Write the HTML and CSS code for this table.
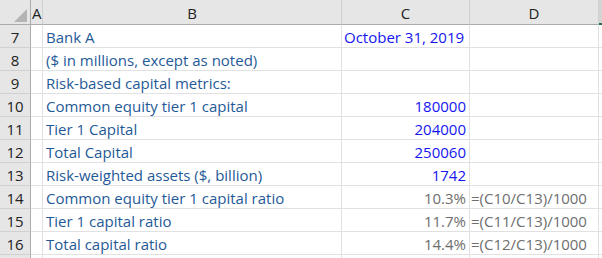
FILE: index.html
```html
<!DOCTYPE html>
<html>
<head>
<meta charset="utf-8">
<link rel="stylesheet" href="styles.css">
</head>
<body>
<div class="sheet">
  <div class="corner"><svg width="31" height="25" viewBox="0 0 31 25"><polygon points="27,9 27,22 14,22" fill="#b4b4b4"/></svg></div>
  <div class="colhead colA">A</div>
  <div class="colhead">B</div>
  <div class="colhead">C</div>
  <div class="colhead">D</div>
  <div class="colhead colE"></div>

  <div class="rowhead">7</div><div class="cell"></div><div class="cell label">Bank A</div><div class="cell date">October 31, 2019</div><div class="cell"></div><div class="cell edge"></div>
  <div class="rowhead">8</div><div class="cell"></div><div class="cell label">($ in millions, except as noted)</div><div class="cell"></div><div class="cell"></div><div class="cell edge"></div>
  <div class="rowhead">9</div><div class="cell"></div><div class="cell label">Risk-based capital metrics:</div><div class="cell"></div><div class="cell"></div><div class="cell edge"></div>
  <div class="rowhead">10</div><div class="cell"></div><div class="cell label">Common equity tier 1 capital</div><div class="cell num">180000</div><div class="cell"></div><div class="cell edge"></div>
  <div class="rowhead">11</div><div class="cell"></div><div class="cell label">Tier 1 Capital</div><div class="cell num">204000</div><div class="cell"></div><div class="cell edge"></div>
  <div class="rowhead">12</div><div class="cell"></div><div class="cell label">Total Capital</div><div class="cell num">250060</div><div class="cell"></div><div class="cell edge"></div>
  <div class="rowhead">13</div><div class="cell"></div><div class="cell label">Risk-weighted assets ($, billion)</div><div class="cell num">1742</div><div class="cell"></div><div class="cell edge"></div>
  <div class="rowhead">14</div><div class="cell"></div><div class="cell label">Common equity tier 1 capital ratio</div><div class="cell pct">10.3%</div><div class="cell formula">=(C10/C13)/1000</div><div class="cell edge"></div>
  <div class="rowhead">15</div><div class="cell"></div><div class="cell label">Tier 1 capital ratio</div><div class="cell pct">11.7%</div><div class="cell formula">=(C11/C13)/1000</div><div class="cell edge"></div>
  <div class="rowhead">16</div><div class="cell"></div><div class="cell label">Total capital ratio</div><div class="cell pct">14.4%</div><div class="cell formula">=(C12/C13)/1000</div><div class="cell edge"></div>
  <div class="rowhead last"></div><div class="cell last"></div><div class="cell last"></div><div class="cell last"></div><div class="cell last"></div><div class="cell edge last"></div>
</div>
</body>
</html>
```

FILE: styles.css
```css
* { box-sizing: border-box; }
html, body { margin: 0; padding: 0; background: #fff; }
body { width: 602px; height: 258px; overflow: hidden; }

.sheet {
  display: grid;
  grid-template-columns: 31px 12px 299px 128px 129px 3px;
  grid-template-rows: 25px repeat(10, 23px) 3px;
  font-family: "Open Sans", "Liberation Sans", sans-serif;
  font-size: 15px;
}

.corner {
  background: #e6e6e6;
  border-right: 1px solid #ababab;
  border-bottom: 1px solid #ababab;
  overflow: hidden;
}
.corner svg { display: block; }

.colhead {
  background: #e6e6e6;
  border-right: 1px solid #d0d0d0;
  border-bottom: 1px solid #ababab;
  color: #222;
  display: flex;
  align-items: center;
  justify-content: center;
  padding-top: 1px;
  overflow: visible;
  white-space: nowrap;
}
.colA { justify-content: flex-start; padding-left: 1px; }
.colE { background: #d4d4d4; border-right: none; border-bottom: 2px solid #217346; }

.rowhead {
  background: #e6e6e6;
  border-right: 1px solid #ababab;
  border-bottom: 1px solid #d0d0d0;
  color: #222;
  display: flex;
  align-items: center;
  justify-content: center;
  padding-top: 1px;
}

.cell {
  border-right: 1px solid #e1e1e1;
  border-bottom: 1px solid #e1e1e1;
  display: flex;
  align-items: center;
  white-space: nowrap;
  padding: 1px 3px 0 3px;
  overflow: visible;
}
.edge { border-right: none; }
.last { border-bottom: none; }

.label { color: #1f5a98; }
.date { color: #1515f0; padding-left: 2px; }
.num { color: #1515f0; justify-content: flex-end; }
.pct { color: #6e6e6e; justify-content: flex-end; }
.formula { color: #6e6e6e; padding-left: 1px; }
```
